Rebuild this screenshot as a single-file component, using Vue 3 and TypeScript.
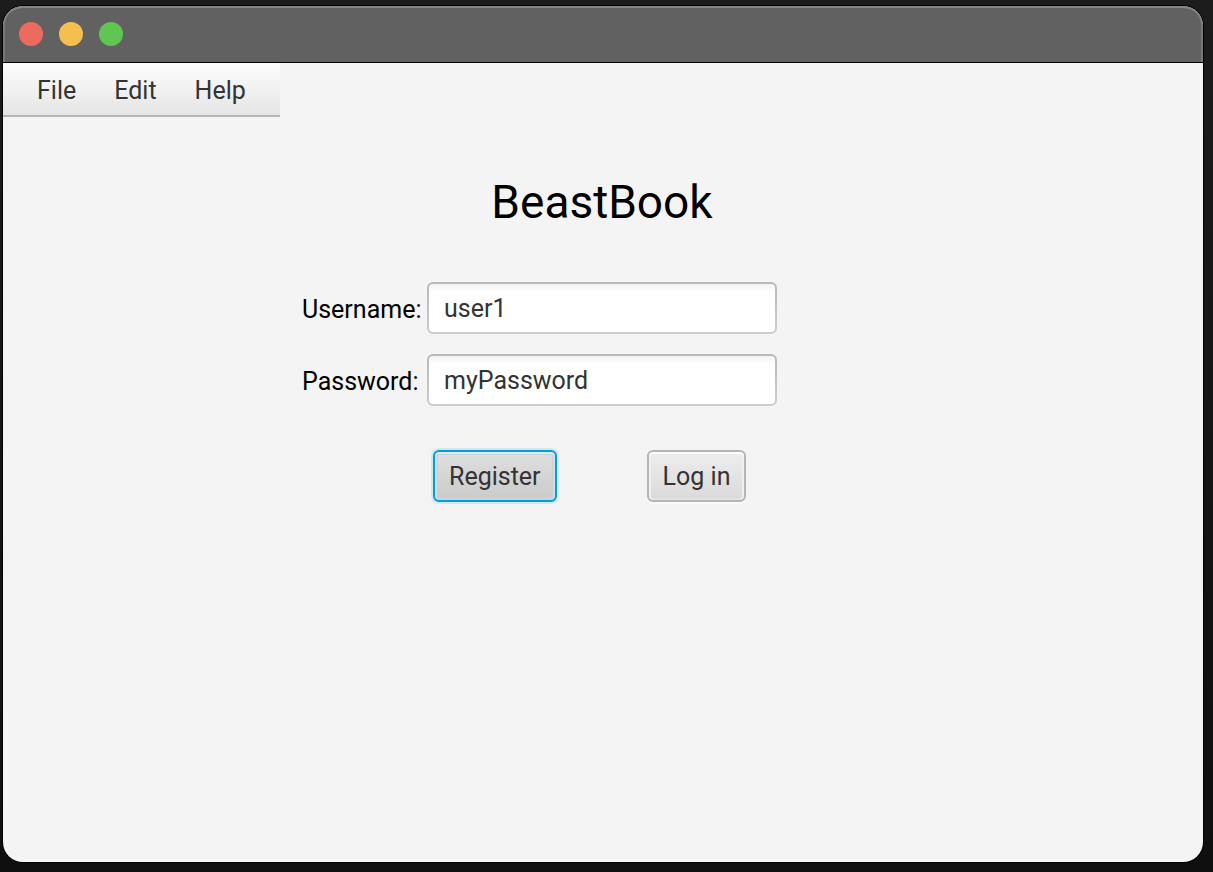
<script setup lang="ts">
import { ref } from 'vue'

const menus: string[] = ['File', 'Edit', 'Help']
const lights: string[] = ['close', 'minimize', 'zoom']
const username = ref<string>('user1')
const password = ref<string>('myPassword')
</script>

<template>
  <div class="desktop">
    <div class="window">
      <header class="titlebar">
        <button v-for="light in lights" :key="light" type="button" class="light" :class="light" :aria-label="light"></button>
      </header>
      <nav class="menubar">
        <button v-for="menu in menus" :key="menu" type="button" class="menu">{{ menu }}</button>
      </nav>
      <main class="content">
        <h1 class="title">BeastBook</h1>
        <form class="form" @submit.prevent>
          <label class="label" for="username">Username:</label>
          <input id="username" v-model="username" class="field" type="text" autocomplete="off" spellcheck="false" />
          <label class="label" for="password">Password:</label>
          <input id="password" v-model="password" class="field" type="text" autocomplete="off" spellcheck="false" />
          <div class="actions">
            <button type="button" class="button focused">Register</button>
            <button type="submit" class="button">Log in</button>
          </div>
        </form>
      </main>
    </div>
  </div>
</template>

<style>
body {
  margin: 0;
  background: #141414;
}
</style>

<style scoped>
.desktop {
  box-sizing: border-box;
  display: flex;
  min-height: 100vh;
  padding: 6px 10px 10px 3px;
  background: linear-gradient(#1c1c1c, #0f0f0f);
  font-family: Roboto, "Liberation Sans", sans-serif;
  font-size: 25px;
  line-height: 32px;
}

.window {
  flex: 1;
  display: flex;
  flex-direction: column;
  overflow: hidden;
  border-radius: 20px;
  background: #f4f4f4;
  box-shadow: 0 0 0 1px #000;
}

.titlebar {
  box-sizing: border-box;
  display: flex;
  align-items: center;
  gap: 16px;
  height: 57px;
  padding: 0 16px;
  border-bottom: 1px solid #000;
  border-radius: 20px 20px 0 0;
  background: #616161;
  box-shadow: inset 0 2px 0 #868686, inset 2px 0 0 #797979, inset -2px 0 0 #797979;
}

.light {
  width: 24px;
  height: 24px;
  padding: 0;
  border: 0;
  border-radius: 50%;
}

.close {
  background: #ed6a5e;
}

.minimize {
  background: #f5bf4f;
}

.zoom {
  background: #61c554;
}

.menubar {
  box-sizing: border-box;
  display: flex;
  align-self: flex-start;
  align-items: center;
  gap: 38px;
  height: 54px;
  padding: 4px 34px 0;
  border-bottom: 2px solid #b5b5b5;
  background: linear-gradient(#fdfdfd, #e5e5e5);
}

.menu {
  padding: 0;
  border: 0;
  background: none;
  color: #333;
  font: inherit;
}

.content {
  display: flex;
  flex-direction: column;
  align-items: center;
  padding: 56px 2px 0 0;
}

.title {
  margin: 0;
  color: #000;
  font-size: 46px;
  font-weight: 400;
  line-height: 58px;
}

.form {
  display: grid;
  grid-template-columns: 125px 350px 125px;
  row-gap: 20px;
  align-items: center;
  margin-top: 51px;
}

.label {
  grid-column: 1;
  padding-top: 4px;
  color: #000;
}

.field {
  grid-column: 2;
  box-sizing: border-box;
  width: 100%;
  height: 52px;
  padding: 0 15px;
  border: 2px solid transparent;
  border-radius: 6px;
  background: linear-gradient(#f3f3f3, #fff 8px) padding-box, linear-gradient(#b8b8b8, #cdcdcd) border-box;
  color: #333;
  font: inherit;
  outline: none;
}

.actions {
  grid-column: 2;
  display: flex;
  gap: 90px;
  margin-top: 24px;
  padding-left: 6px;
}

.button {
  box-sizing: border-box;
  height: 52px;
  padding: 2px 14px 0;
  border: 2px solid #b5b5b5;
  border-radius: 6px;
  background: linear-gradient(#eee, #d9d9d9);
  box-shadow: 0 2px 0 #fafafa, inset 0 2px 0 #fff, inset 2px 0 0 #f0f0f0, inset -2px 0 0 #f0f0f0, inset 0 -2px 0 #e2e2e2;
  color: #333;
  font: inherit;
}

.focused {
  border-color: #039ed3;
  background: linear-gradient(#e0e0e0, #cacaca);
  box-shadow: 0 0 0 2px #d2e8f0, inset 0 2px 0 #dcecf2, inset 2px 0 0 #d0dee4, inset -2px 0 0 #d0dee4, inset 0 -2px 0 #c4d6dd, inset 0 0 0 3px #c9d2d5;
}
</style>
